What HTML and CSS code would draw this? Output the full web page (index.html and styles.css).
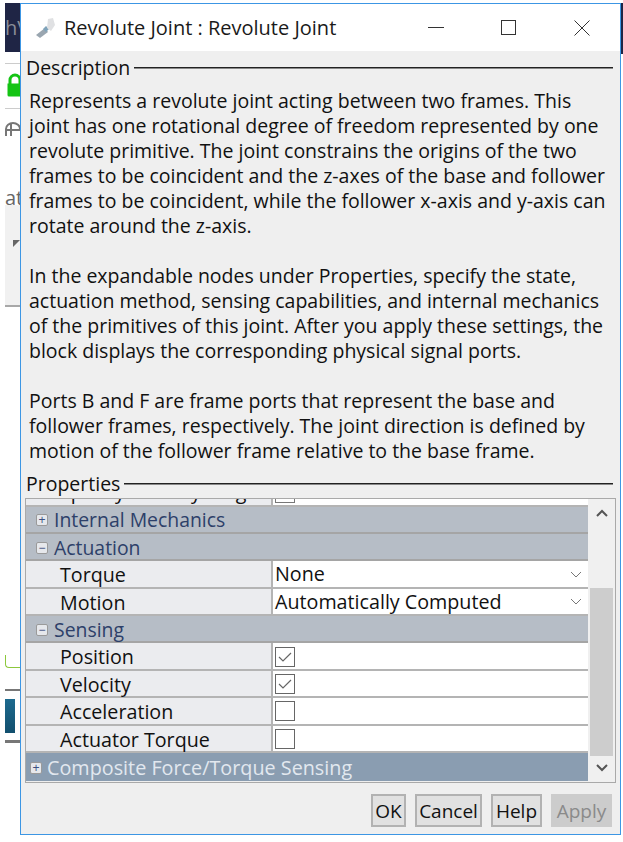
FILE: index.html
```html
<!DOCTYPE html>
<html lang="en">
<head>
  <meta charset="UTF-8" />
  <title>Revolute Joint : Revolute Joint</title>
  <link rel="stylesheet" href="styles.css">
</head>
<body>
  <div class="desktop">
    <div class="bg-top"><span>hV</span></div>
    <div class="bg-top-right"></div>
    <div class="bg-lock">
      <svg width="15" height="24" viewBox="0 0 15 24"><path d="M4 11V7a5 5 0 0 1 10 0v4" fill="none" stroke="#14c414" stroke-width="3"/><path d="M1.500 10.500h13.500v13H3a1.500 1.500 0 0 1-1.500-1.500z" fill="#14c414"/></svg>
    </div>
    <div class="bg-rule bg-rule-1"></div>
    <div class="bg-rule bg-rule-2"></div>
    <div class="bg-arch">
      <svg width="15" height="16" viewBox="0 0 15 16"><path d="M1 15V8a7 6 0 0 1 14 0M1 9h14M6 3v12" fill="none" stroke="#777" stroke-width="2"/></svg>
    </div>
    <div class="bg-at">at</div>
    <div class="bg-band"></div>
    <div class="bg-tri"></div>
    <div class="bg-green"></div>
    <div class="bg-logo"></div>

    <div class="window">
      <div class="titlebar">
        <svg class="app-icon" width="22" height="22" viewBox="0 0 22 22">
          <path d="M2 18l9-7 3 4-8 6z" fill="#9aa6b0"/>
          <path d="M9 12l3-3 3 3-3 3z" fill="#7fa3ba"/>
          <path d="M13 11l1-9 5-1 2 7-4 6z" fill="#e0e1e3"/>
        </svg>
        <span class="title">Revolute Joint : Revolute Joint</span>
        <div class="win-btns">
          <svg width="16" height="16" viewBox="0 0 16 16"><path d="M0 7.500h16" stroke="#333" fill="none"/></svg>
          <svg width="16" height="16" viewBox="0 0 16 16"><rect x="0.500" y="0.500" width="14" height="14" stroke="#333" fill="none"/></svg>
          <svg width="16" height="16" viewBox="0 0 16 16"><path d="M0.500 0.500l15 15M15.500 0.500l-15 15" stroke="#333" fill="none"/></svg>
        </div>
      </div>

      <div class="content">
        <div class="legend"><span>Description</span><i></i></div>
        <div class="desc">
          <p>Represents a revolute joint acting between two frames. This<br>
          joint has one rotational degree of freedom represented by one<br>
          revolute primitive. The joint constrains the origins of the two<br>
          frames to be coincident and the z-axes of the base and follower<br>
          frames to be coincident, while the follower x-axis and y-axis can<br>
          rotate around the z-axis.</p>
          <p>In the expandable nodes under Properties, specify the state,<br>
          actuation method, sensing capabilities, and internal mechanics<br>
          of the primitives of this joint. After you apply these settings, the<br>
          block displays the corresponding physical signal ports.</p>
          <p>Ports B and F are frame ports that represent the base and<br>
          follower frames, respectively. The joint direction is defined by<br>
          motion of the follower frame relative to the base frame.</p>
        </div>

        <div class="legend legend-props"><span>Properties</span><i></i></div>
        <div class="props">
          <div class="prop-rows">
            <div class="row row-cut">
              <div class="cell-label"><span>Specify Velocity Target</span></div>
              <div class="cell-value"><b class="check-cut"></b></div>
            </div>
            <div class="row group"><b class="tree">+</b>Internal Mechanics</div>
            <div class="row group"><b class="tree">−</b>Actuation</div>
            <div class="row">
              <div class="cell-label">Torque</div>
              <div class="cell-value select">None<svg width="12" height="7" viewBox="0 0 12 7"><path d="M1 1l5 5 5-5" fill="none" stroke="#777"/></svg></div>
            </div>
            <div class="row">
              <div class="cell-label">Motion</div>
              <div class="cell-value select">Automatically Computed<svg width="12" height="7" viewBox="0 0 12 7"><path d="M1 1l5 5 5-5" fill="none" stroke="#777"/></svg></div>
            </div>
            <div class="row group"><b class="tree">−</b>Sensing</div>
            <div class="row">
              <div class="cell-label">Position</div>
              <div class="cell-value"><span class="check"><svg width="18" height="18" viewBox="0 0 18 18"><path d="M3 9l4 4 8-8" fill="none" stroke="#666" stroke-width="1.200"/></svg></span></div>
            </div>
            <div class="row">
              <div class="cell-label">Velocity</div>
              <div class="cell-value"><span class="check"><svg width="18" height="18" viewBox="0 0 18 18"><path d="M3 9l4 4 8-8" fill="none" stroke="#666" stroke-width="1.200"/></svg></span></div>
            </div>
            <div class="row">
              <div class="cell-label">Acceleration</div>
              <div class="cell-value"><span class="check"></span></div>
            </div>
            <div class="row">
              <div class="cell-label">Actuator Torque</div>
              <div class="cell-value"><span class="check"></span></div>
            </div>
            <div class="row group composite"><b class="tree">+</b>Composite Force/Torque Sensing</div>
          </div>
          <div class="scrollbar">
            <svg width="12" height="8" viewBox="0 0 12 8"><path d="M1 7l5-5 5 5" fill="none" stroke="#555" stroke-width="2"/></svg>
            <div class="thumb-track"><div class="thumb"></div></div>
            <svg width="12" height="8" viewBox="0 0 12 8"><path d="M1 1l5 5 5-5" fill="none" stroke="#555" stroke-width="2"/></svg>
          </div>
        </div>

        <div class="buttons">
          <button class="btn-ok">OK</button>
          <button class="btn-cancel">Cancel</button>
          <button class="btn-help">Help</button>
          <button class="btn-apply" disabled>Apply</button>
        </div>
      </div>
    </div>
  </div>
</body>
</html>
```

FILE: styles.css
```css
html, body {
  margin: 0;
  height: 100%;
  background: #fff;
}
body {
  font-family: 'Open Sans', 'Noto Sans', sans-serif;
  color: #111;
  overflow: hidden;
}
.desktop {
  position: relative;
  width: 623px;
  height: 842px;
  padding: 3px 2px 0 20px;
  box-sizing: border-box;
}

/* what shows of the windows behind the dialog */
.bg-top {
  position: absolute;
  left: 5px;
  top: 3px;
  width: 15px;
  height: 49px;
  background: #1f2545;
  overflow: hidden;
}
.bg-top span {
  position: absolute;
  left: 0;
  top: 11px;
  font-size: 20px;
  color: #8a8d99;
}
.bg-top-right {
  position: absolute;
  left: 621px;
  top: 3px;
  width: 2px;
  height: 51px;
  background: #1f2545;
}
.bg-lock {
  position: absolute;
  left: 6px;
  top: 73px;
  width: 14px;
  height: 24px;
  overflow: hidden;
}
.bg-rule {
  position: absolute;
  left: 5px;
  width: 15px;
  height: 1px;
  background: #ccc;
}
.bg-rule-1 { top: 63px; }
.bg-rule-2 { top: 108px; }
.bg-arch {
  position: absolute;
  left: 5px;
  top: 120px;
  width: 15px;
  height: 16px;
}
.bg-at {
  position: absolute;
  left: 5px;
  top: 184px;
  font-size: 20px;
  color: #666;
  width: 15px;
  overflow: hidden;
}
.bg-band {
  position: absolute;
  left: 5px;
  top: 205px;
  width: 15px;
  height: 100px;
  background: #f1f1f1;
  border-bottom: 2px solid #a8a8a8;
}
.bg-tri {
  position: absolute;
  left: 13px;
  top: 240px;
  border-style: solid;
  border-width: 7px 7px 0 0;
  border-color: #666 transparent transparent transparent;
}
.bg-green {
  position: absolute;
  left: 5px;
  top: 655px;
  width: 15px;
  height: 13px;
  border-bottom: 1px solid #8cc83c;
  border-left: 1px solid #8cc83c;
  border-bottom-left-radius: 4px;
  box-sizing: border-box;
}
.bg-logo {
  position: absolute;
  left: 5px;
  top: 689px;
  width: 15px;
  height: 54px;
  box-sizing: border-box;
  border-top: 2px solid #777;
  border-bottom: 3px solid #777;
  background: linear-gradient(#1d6a8e, #124f6e) 0 8px / 10px 34px no-repeat;
}

.window {
  width: 601px;
  height: 832px;
  box-sizing: border-box;
  border: 1px solid #3c96e4;
  background: #efefef;
  display: flex;
  flex-direction: column;
}
.titlebar {
  height: 47px;
  flex: none;
  background: #fff;
  display: flex;
  align-items: center;
  padding-left: 13px;
}
.app-icon {
  margin-right: 8px;
}
.title {
  font-size: 20px;
  color: #1a1a1a;
}
.win-btns {
  margin-left: auto;
  display: flex;
  gap: 57px;
  padding-right: 30px;
}

.content {
  flex: 1;
  padding: 4px 0 0 4px;
}
.legend {
  display: flex;
  align-items: center;
  gap: 4px;
  height: 25px;
  font-size: 19.5px;
  padding-left: 1px;
  padding-right: 7px;
}
.legend i {
  flex: 1;
  height: 1px;
  background: #222;
  border-bottom: 1px solid #888;
}
.legend-props {
  margin-top: 8px;
}
.desc {
  padding: 8px 0 0 4px;
  height: 375px;
  font-size: 19.5px;
  line-height: 25px;
  white-space: nowrap;
}
.desc p {
  margin: 0 0 25px;
}

.props {
  margin-top: 2px;
  width: 591px;
  height: 285px;
  box-sizing: border-box;
  border: 1px solid #a9a9a9;
  display: flex;
  font-size: 19.7px;
}
.prop-rows {
  flex: 1;
  display: flex;
  flex-direction: column;
}
.row {
  height: 27.4px;
  flex: none;
  box-sizing: border-box;
  border-bottom: 2px solid #b4b4b4;
  display: flex;
  align-items: stretch;
  line-height: 26px;
}
.row-cut {
  height: 7.5px;
  overflow: hidden;
}
.cell-label {
  width: 247px;
  flex: none;
  background: #ebecef;
  padding: 1px 0 0 34px;
  box-sizing: border-box;
  border-right: 2px solid #b4b4b4;
}
.cell-value {
  flex: 1;
  background: #fff;
  padding: 1px 0 0 2px;
  display: flex;
  align-items: center;
}
.row-cut .cell-label {
  padding-top: 0;
}
.row-cut .cell-label span {
  display: block;
  margin-top: -20px;
}
.row-cut .cell-value {
  align-items: flex-start;
  padding-top: 0;
}
.check-cut {
  display: block;
  width: 18px;
  height: 3px;
  background: #fff;
  border: 1px solid #777;
  border-top: 0;
}
.select {
  justify-content: space-between;
  padding-right: 6px;
}
.check {
  width: 18px;
  height: 18px;
  border: 1px solid #666;
  background: #fff;
  display: block;
}
.check svg {
  display: block;
}
.group {
  background: #b6bdc6;
  color: #2d4069;
  align-items: center;
  padding: 2px 0 0 10px;
  border-bottom-color: #a5a5a5;
  font-size: 19.4px;
}
.tree {
  width: 12px;
  height: 12px;
  margin-right: 6px;
  background: #e6e8ec;
  border: 1px solid #9a9a9a;
  border-radius: 2px;
  box-sizing: border-box;
  font: 400 12px/10px 'Liberation Sans', sans-serif;
  text-align: center;
  color: #3d4f80;
}
.composite {
  background: #8a9db1;
  color: #e2e8ef;
  padding-left: 4px;
  border-bottom: 0;
  height: 28px;
  font-size: 19.8px;
}
.composite .tree {
  margin-right: 5px;
}

.scrollbar {
  width: 27px;
  flex: none;
  background: #f0f0f0;
  display: flex;
  flex-direction: column;
  align-items: center;
  padding-top: 10px;
  box-sizing: border-box;
}
.thumb-track {
  flex: 1;
  align-self: stretch;
  padding: 71px 2px 0;
  box-sizing: border-box;
}
.thumb {
  height: 168px;
  background: #cdcdcd;
}
.scrollbar svg:last-child {
  margin-bottom: 10px;
}

.buttons {
  display: flex;
  gap: 9px;
  justify-content: flex-end;
  margin-top: 11px;
  padding-right: 8px;
}
button {
  height: 33px;
  padding: 0;
  font-family: inherit;
  font-size: 19px;
  color: #111;
  background: #e1e1e1;
  border: 2px solid #b2b2b2;
}
.btn-ok { width: 35px; }
.btn-cancel { width: 67px; }
.btn-help { width: 51px; }
.btn-apply {
  width: 61px;
  background: #cccccc;
  border-color: #cccccc;
  color: #8a8a8a;
}
```
